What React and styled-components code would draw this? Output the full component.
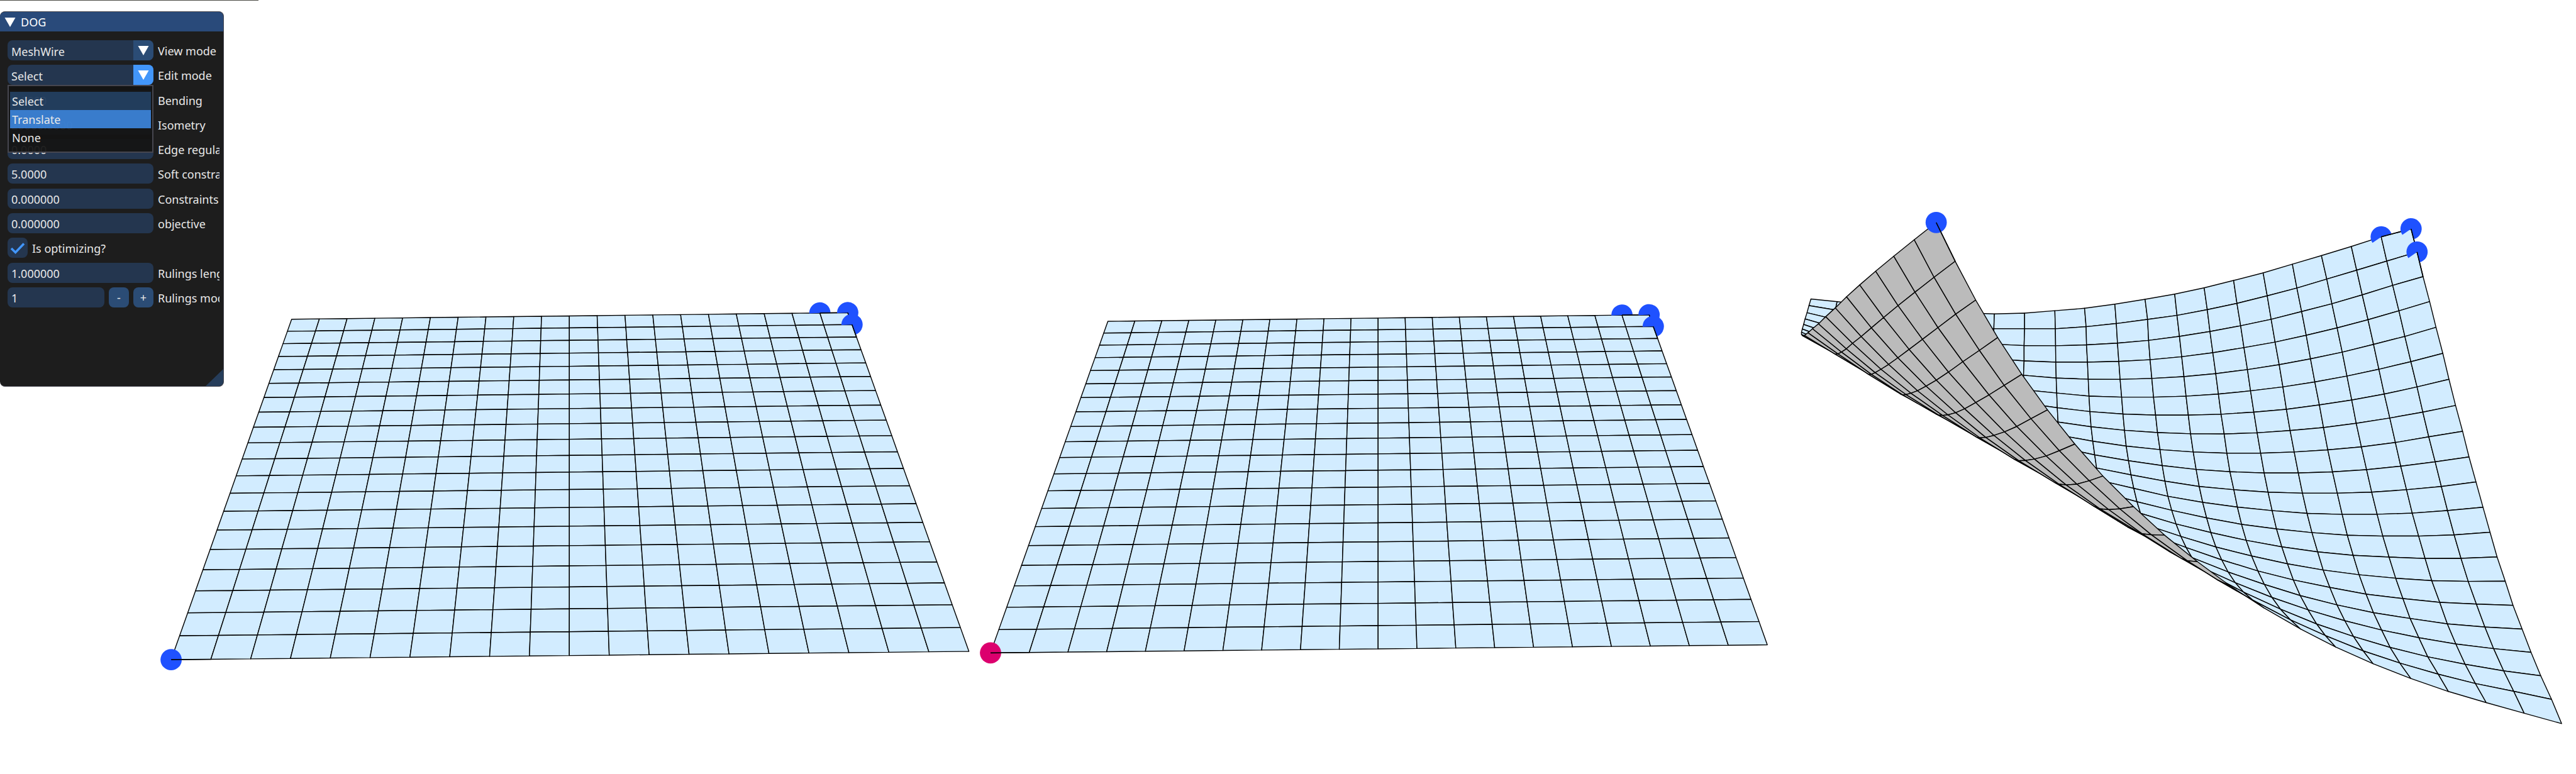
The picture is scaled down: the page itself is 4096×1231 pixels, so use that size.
import React from "react";
import styled, { createGlobalStyle } from "styled-components";

const GlobalStyle = createGlobalStyle`
  *, *::before, *::after { box-sizing: border-box; }
  body { margin: 0; background: #fff; }
`;

const FONT = `"Noto Sans", "Open Sans", sans-serif`;
const TEXT = "#e8e8e8";
const FIELD = "#24364f";
const BUTTON = "#2b4c75";
const ACCENT = "#4296fa";
const BORDER = "#46464f";

/* ---------- mesh geometry ---------- */

const N = 20;

// Perspective image of an N x N square grid, from its four corners
// (top left, top right, bottom right, bottom left).
function planeMesh([a, b, c, d]) {
  const dx1 = b[0] - c[0], dx2 = d[0] - c[0], dx3 = a[0] - b[0] + c[0] - d[0];
  const dy1 = b[1] - c[1], dy2 = d[1] - c[1], dy3 = a[1] - b[1] + c[1] - d[1];
  const det = dx1 * dy2 - dx2 * dy1;
  const g = (dx3 * dy2 - dx2 * dy3) / det;
  const h = (dx1 * dy3 - dx3 * dy1) / det;
  const grid = [];
  for (let r = 0; r <= N; r++) {
    const row = [];
    for (let q = 0; q <= N; q++) {
      const u = q / N, v = r / N, w = g * u + h * v + 1;
      row.push([
        ((b[0] - a[0] + g * b[0]) * u + (d[0] - a[0] + h * d[0]) * v + a[0]) / w,
        ((b[1] - a[1] + g * b[1]) * u + (d[1] - a[1] + h * d[1]) * v + a[1]) / w,
      ]);
    }
    grid.push(row);
  }
  return grid;
}

// Natural cubic spline through (t, y), evaluated at 0..N.
function spline(t, y) {
  const n = t.length;
  const m = new Array(n).fill(0), cp = new Array(n).fill(0), dp = new Array(n).fill(0);
  for (let i = 1; i < n - 1; i++) {
    const h0 = t[i] - t[i - 1], h1 = t[i + 1] - t[i];
    const rhs = 6 * ((y[i + 1] - y[i]) / h1 - (y[i] - y[i - 1]) / h0);
    const den = 2 * (h0 + h1) - h0 * cp[i - 1];
    cp[i] = h1 / den;
    dp[i] = (rhs - h0 * dp[i - 1]) / den;
  }
  for (let i = n - 2; i > 0; i--) m[i] = dp[i] - cp[i] * m[i + 1];
  const out = [];
  for (let x = 0, k = 0; x <= N; x++) {
    while (k < n - 2 && x > t[k + 1]) k++;
    const h = t[k + 1] - t[k], A = (t[k + 1] - x) / h, B = (x - t[k]) / h;
    out.push(A * y[k] + B * y[k + 1] + (((A ** 3 - A) * m[k] + (B ** 3 - B) * m[k + 1]) * h * h) / 6);
  }
  return out;
}

// Folded sheet: vertices are given per patch, each patch with its own origin and
// units; vertices that lie behind the fold are filled in along the column.
function foldedMesh() {
  const cols = Array.from({ length: N + 1 }, () => ({}));
  const put = (p, r, c, x, y) => { cols[c][r] = [p[0] + x / p[2], p[1] + y / p[3]]; };
  const down = (p, c, r, v) => { for (let i = 0; i < v.length; i += 2) put(p, r + i / 2, c, v[i], v[i + 1]); };
  const left = (p, r, c, v) => { for (let i = 0; i < v.length; i += 2) put(p, r, c - i / 2, v[i], v[i + 1]); };
  const right = (p, r, c, v) => { for (let i = 0; i < v.length; i += 2) put(p, r, c + i / 2, v[i], v[i + 1]); };

  const whole = [4200, 460, 0.8435, 1.225];
  const tip = [4200, 480, 2.6133, 3];
  const middle = [4700, 800, 2.24, 2.6133];
  const upper = [5100, 500, 2.0632, 2.24];
  const lower = [5350, 1120, 2.24, 2.45];
  const back = [4400, 840, 3, 3];
  const pinch = [4990, 1200, 3, 3];
  const page = [0, 0, 1, 1];

  right(whole, 0, 6, [414, 341, 474, 339, 534, 332, 593, 325, 653, 313, 713, 299]);
  right(whole, 1, 6, [413, 384, 474, 384, 535, 384, 596, 378, 656, 369, 718, 357]);

  left(upper, 0, 20, [1178, 86, 1033, 128, 888, 179, 743, 227, 602, 272, 460, 318, 317, 358, 174, 397, 31, 430]);
  left(upper, 1, 20, [1207, 208, 1060, 256, 914, 304, 769, 351, 624, 398, 480, 439, 333, 479, 189, 512, 42, 542]);
  left(upper, 2, 20, [1236, 338, 1089, 384, 941, 434, 794, 481, 647, 522, 499, 563, 351, 597, 202, 627, 54, 653]);
  left(upper, 3, 20, [1268, 469, 1119, 518, 969, 565, 819, 608, 669, 647, 518, 683, 367, 712, 216, 739, 65, 760]);
  left(upper, 4, 20, [1299, 605, 1148, 653, 996, 695, 844, 736, 690, 771, 538, 802, 384, 828, 230, 849, 76, 865]);
  left(upper, 5, 20, [1332, 742, 1177, 786, 1022, 826, 867, 862, 711, 893, 556, 919, 399, 940, 243, 957, 86, 968]);
  left(upper, 6, 20, [1362, 879, 1207, 919, 1048, 957, 890, 988, 733, 1014, 573, 1037, 415, 1052, 256, 1063, 97, 1068]);
  left(upper, 7, 20, [1394, 1017, 1235, 1052, 1075, 1083, 912, 1111, 753, 1133, 591, 1149, 431, 1161, 271, 1167, 108, 1166]);
  left(upper, 8, 20, [1428, 1153, 1264, 1182, 1102, 1212, 937, 1235, 774, 1251, 611, 1262, 448, 1268, 284, 1268, 121, 1262]);
  left(upper, 9, 20, [1459, 1288, 1295, 1314, 1128, 1337, 962, 1355, 797, 1367, 631, 1373, 465, 1373, 299, 1366, 135, 1354]);
  left(upper, 10, 20, [1493, 1420, 1325, 1444, 1156, 1461, 987, 1474, 820, 1479, 651, 1479, 484, 1474, 318, 1461, 150, 1444]);

  down(lower, 20, 11, [1098, 180, 1135, 324, 1172, 466, 1215, 606, 1256, 745, 1304, 882, 1351, 1016, 1402, 1151, 1459, 1287, 1512, 1427]);
  down(lower, 19, 11, [911, 199, 946, 339, 982, 474, 1020, 607, 1063, 738, 1108, 870, 1154, 995, 1207, 1123, 1260, 1241, 1315, 1367]);
  down(lower, 18, 11, [725, 214, 759, 346, 793, 475, 828, 603, 870, 728, 910, 852, 955, 968, 1004, 1085, 1058, 1196, 1115, 1306]);
  down(lower, 17, 11, [540, 220, 570, 346, 603, 467, 638, 589, 676, 706, 714, 821, 760, 932, 807, 1042, 862, 1142, 916, 1242]);
  down(lower, 16, 11, [356, 221, 383, 341, 414, 457, 445, 569, 482, 681, 521, 788, 564, 888, 609, 988, 660, 1078, 718, 1167]);
  down(lower, 15, 11, [171, 215, 197, 326, 227, 437, 256, 542, 291, 642, 329, 743, 370, 834, 416, 925, 467, 1008, 519, 1082]);
  down(lower, 14, 12, [10, 305, 38, 408, 68, 506, 99, 599, 135, 689, 176, 771, 222, 853, 268, 920, 322, 986]);

  right(middle, 2, 7, [136, 34, 302, 35, 465, 30, 628, 19, 792, 2]);
  right(middle, 3, 7, [136, 128, 303, 136, 470, 136, 635, 131, 800, 121]);
  right(middle, 4, 7, [133, 217, 305, 234, 474, 241, 642, 242, 809, 236]);
  right(middle, 5, 7, [137, 306, 308, 326, 478, 345, 650, 351, 818, 351]);
  right(middle, 6, 7, [141, 388, 311, 416, 483, 440, 657, 455, 829, 462]);
  right(middle, 7, 7, [145, 470, 315, 504, 489, 533, 665, 555, 839, 569]);
  right(middle, 8, 7, [150, 545, 323, 585, 498, 622, 674, 652, 852, 674]);
  right(middle, 9, 8, [333, 662, 508, 706, 686, 742, 864, 772]);
  right(middle, 10, 8, [343, 738, 518, 787, 699, 829, 878, 868]);
  right(middle, 11, 9, [532, 862, 714, 912, 894, 961, 1077, 998, 1260, 1027, 1443, 1049]);
  right(middle, 12, 9, [547, 935, 731, 994, 914, 1047, 1098, 1094, 1282, 1133]);
  right(middle, 13, 9, [567, 998, 750, 1066, 937, 1131]);
  down(middle, 9, 14, [593, 1060, 630, 1112]);
  down(middle, 10, 14, [772, 1134, 800, 1192, 840, 1248]);
  down(middle, 11, 14, [962, 1207, 990, 1276, 1021, 1338]);

  down(pinch, 13, 13, [880, 214, 918, 324, 962, 430, 1008, 525, 1062, 617, 1122, 700, 1192, 775, 1265, 841]);
  down(pinch, 12, 13, [630, 159, 666, 261, 707, 352, 752, 437, 803, 513, 862, 580, 930, 638, 1005, 691]);
  down(pinch, 11, 17, [545, 397, 603, 445, 680, 494, 767, 536]);
  down(pinch, 10, 18, [425, 343, 465, 358, 535, 364]);

  down(tip, 0, 0, [155, 670, 143, 717, 131, 767, 119, 811, 110, 850, 102, 882, 97, 905, 97, 920, 102, 928,
    115, 927, 137, 908, 165, 880, 202, 845, 246, 795, 305, 733, 374, 655, 455, 571, 553, 474, 664, 368, 790, 252, 925, 130]);
  down(tip, 1, 0, [316, 689, 305, 748, 297, 813, 290, 868, 285, 918, 282, 960, 282, 997, 285, 1030, 293, 1050,
    305, 1060, 322, 1058, 343, 1045, 373, 1022, 411, 983, 464, 935, 527, 874, 602, 801, 691, 717, 795, 622, 912, 517, 1042, 404]);
  down(tip, 2, 11, [527, 1202, 550, 1190, 586, 1166, 633, 1132, 690, 1085, 759, 1026, 841, 955, 936, 872, 1045, 777, 1168, 678]);
  down(tip, 3, 12, [740, 1345, 770, 1335, 811, 1318, 863, 1285, 926, 1243, 1001, 1186, 1089, 1113, 1191, 1033, 1303, 943]);
  down(back, 4, 13, [507, 412, 545, 408, 600, 393, 663, 365, 742, 321, 835, 267, 942, 200, 1066, 122]);
  down(back, 5, 13, [748, 566, 770, 570, 812, 567, 870, 553, 944, 528, 1031, 490, 1131, 435, 1247, 373]);
  down(back, 6, 14, [1015, 722, 1045, 731, 1092, 730, 1156, 720, 1239, 698, 1331, 661, 1440, 614]);
  down(page, 7, 15, [4834, 1136, 4843, 1139, 4860, 1141, 4885, 1139, 4914, 1131, 4946, 1120]);
  down(page, 8, 16, [4925, 1191, 4939, 1197, 4960, 1199, 4986, 1197, 5018, 1192]);
  down(page, 9, 17, [5028, 1251, 5039, 1256, 5060, 1258, 5091, 1259]);

  down(tip, 6, 2, [1280, 989, 1280, 1092, 1278, 1190]);
  right(page, 0, 2, [4395, 718, 4469, 726, 4543, 732, 4617, 736]);
  right(page, 4, 2, [4380, 815, 4455, 839, 4531, 857, 4610, 868]);
  right(page, 8, 2, [4385, 870, 4464, 912, 4543, 948, 4623, 978, 4702, 995]);

  const filled = cols.map((col) => {
    const rows = Object.keys(col).map(Number).sort((p, q) => p - q);
    const xs = spline(rows, rows.map((r) => col[r][0]));
    const ys = spline(rows, rows.map((r) => col[r][1]));
    return xs.map((x, i) => [x, ys[i]]);
  });
  return Array.from({ length: N + 1 }, (_, r) => filled.map((col) => col[r]));
}

const area = (q) => q.reduce((s, p, i) => {
  const n = q[(i + 1) % q.length];
  return s + p[0] * n[1] - n[0] * p[1];
}, 0);

const pts = (list) => list.map((p) => `${p[0].toFixed(1)},${p[1].toFixed(1)}`).join(" ");

function Cells({ grid }) {
  const cells = [];
  for (let r = 0; r < N; r++) {
    for (let c = 0; c < N; c++) {
      const q = [grid[r][c], grid[r][c + 1], grid[r + 1][c + 1], grid[r + 1][c]];
      cells.push(<polygon key={`${r}-${c}`} points={pts(q)} fill={area(q) > 0 ? "#d2ecff" : "#bbbbbb"} />);
    }
  }
  return <g stroke="#000" strokeWidth="2.1" strokeLinejoin="round">{cells}</g>;
}

const R = 25;

// Handle on a vertex: a full disc, or the part of it that shows past the sheet.
function Handle({ grid, at, to, from, disc, color = "#1f51ff" }) {
  const p = grid[at[0]][at[1]];
  const q = grid[to[0]][to[1]];
  const end = Math.atan2(q[1] - p[1], q[0] - p[0]);
  let shape;
  if (disc) {
    shape = <circle cx={p[0]} cy={p[1]} r={R} fill={color} />;
  } else {
    const start = Math.atan2(from[1], from[0]);
    const sweep = (end - start + Math.PI * 4) % (Math.PI * 2);
    const s = [p[0] + R * Math.cos(start), p[1] + R * Math.sin(start)];
    const e = [p[0] + R * Math.cos(end), p[1] + R * Math.sin(end)];
    shape = <path d={`M${p} L${s} A${R} ${R} 0 ${sweep > Math.PI ? 1 : 0} 1 ${e} Z`} fill={color} />;
  }
  return (
    <g>
      {shape}
      <line x1={p[0]} y1={p[1]} x2={q[0]} y2={q[1]} stroke="#000" strokeWidth="2.4" />
    </g>
  );
}

const FLAT = [-1, 0.04];
const SLOPED = [-0.82, 0.57];

const anchors = (from) => [
  { at: [0, 19], to: [0, 20], from },
  { at: [0, 20], to: [1, 20], from },
  { at: [1, 20], to: [2, 20], from },
];

const VIEWS = [
  {
    id: "picked", title: "Flat sheet, corner selected", box: "0 0 2292 1821",
    grid: planeMesh([[686, 751], [1994, 735.5], [2279, 1532.5], [402.5, 1552]]),
    handles: [...anchors(FLAT), { at: [20, 0], to: [20, 1], disc: true }],
  },
  {
    id: "active", title: "Flat sheet, corner active", box: "2292 0 1903 1821",
    grid: planeMesh([[2606.5, 756], [3879.5, 740.5], [4157.5, 1517], [2330.5, 1536]]),
    handles: [...anchors(FLAT), { at: [20, 0], to: [20, 1], disc: true, color: "#dc006e" }],
  },
  {
    id: "folded", title: "Folded sheet", box: "4195 0 1864 1821",
    grid: foldedMesh(),
    handles: [...anchors(SLOPED), { at: [20, 0], to: [20, 1], disc: true }],
  },
];

/* ---------- page ---------- */

const Page = styled.main`
  position: relative;
  font: 18px/32px ${FONT};
  color: ${TEXT};
`;

const TopRule = styled.div`
  position: absolute;
  top: 0;
  left: 0;
  width: 411px;
  height: 1px;
  background: #4a4a44;
`;

const Stage = styled.section`
  display: grid;
  grid-template-columns: 2292fr 1903fr 1864fr;
`;

const Viewport = styled.svg`
  display: block;
  width: 100%;
  height: auto;
`;

/* ---------- tool window ---------- */

const Panel = styled.aside`
  position: absolute;
  top: 18px;
  left: 0;
  width: 356px;
  background: #1d1d1d;
  border: 1px solid ${BORDER};
  border-left: 0;
  border-radius: 8px;
  overflow: hidden;
`;

const TitleBar = styled.header`
  display: flex;
  align-items: center;
  height: 31px;
  background: #294a7a;
  color: #fff;
`;

const TitleText = styled.h1`
  margin: 0;
  font-size: 18px;
  line-height: 32px;
  font-weight: 400;
`;

const Collapse = styled.button`
  display: flex;
  width: 33px;
  height: 31px;
  padding: 0;
  border: 0;
  background: none;
`;

const Form = styled.form`
  display: flex;
  flex-direction: column;
  justify-content: space-between;
  height: 425px;
  margin: 14px 6px 125px 12px;
`;

const Row = styled.div`
  display: flex;
  gap: 7px;
  height: 32px;
`;

const Label = styled.label`
  flex: 1;
  min-width: 0;
  line-height: 34px;
  overflow: hidden;
  white-space: nowrap;
`;

const Field = styled.input`
  width: ${(p) => p.$width || 232}px;
  height: 32px;
  padding: 2px 6px 0;
  border: 0;
  border-radius: 8px;
  background: ${FIELD};
  color: inherit;
  font: inherit;
`;

const Combo = styled.div`
  position: relative;
  display: grid;
  grid-template-columns: 200px 32px;
  width: 232px;
  height: 32px;
  border-radius: 8px;
`;

const Select = styled.select`
  grid-area: 1 / 1 / 2 / 3;
  appearance: none;
  height: 32px;
  padding: 2px 38px 0 6px;
  border: 0;
  border-radius: 8px;
  background: ${FIELD};
  color: inherit;
  font: inherit;
`;

const ComboArrow = styled.span`
  grid-area: 1 / 2 / 2 / 3;
  display: flex;
  border-radius: 0 8px 8px 0;
  background: ${(p) => (p.$open ? ACCENT : BUTTON)};
  pointer-events: none;
`;

const Popup = styled.ul`
  position: absolute;
  z-index: 1;
  top: 32px;
  left: 0;
  width: 232px;
  margin: 0;
  padding: 9px 2px 8px;
  border: 2px solid ${BORDER};
  background: rgba(20, 20, 20, 0.94);
  list-style: none;
`;

const Option = styled.li`
  height: 29px;
  padding: 0 3px;
  line-height: 30px;
  background: ${(p) => (p.$hover ? "rgba(66, 150, 250, 0.8)" : p.$selected ? "rgba(66, 150, 250, 0.31)" : "none")};
`;

const CheckWrap = styled.span`
  display: grid;
  width: 32px;
  height: 32px;
`;

const CheckInput = styled.input`
  grid-area: 1 / 1;
  appearance: none;
  width: 32px;
  height: 32px;
  margin: 0;
  border-radius: 8px;
  background: ${FIELD};
`;

const CheckMark = styled.svg`
  grid-area: 1 / 1;
  pointer-events: none;
`;

const StepButton = styled.button`
  width: 32px;
  height: 32px;
  padding: 0;
  border: 0;
  border-radius: 8px;
  background: ${BUTTON};
  color: inherit;
  font: inherit;
`;

const Grip = styled.svg`
  position: absolute;
  right: 0;
  bottom: 0;
`;

const Triangle = () => (
  <svg width="32" height="32" viewBox="0 0 32 32" aria-hidden="true">
    <path d="M7.5 9H24.5L16 24Z" fill="#fff" />
  </svg>
);

function ComboRow({ id, label, value, options, open, hover }) {
  return (
    <Row>
      <Combo>
        <Select id={id} defaultValue={value}>
          {options.map((o) => <option key={o}>{o}</option>)}
        </Select>
        <ComboArrow $open={open}><Triangle /></ComboArrow>
        {open && (
          <Popup role="listbox" aria-label={label}>
            {options.map((o) => (
              <Option key={o} role="option" aria-selected={o === value} $selected={o === value} $hover={o === hover}>{o}</Option>
            ))}
          </Popup>
        )}
      </Combo>
      <Label htmlFor={id}>{label}</Label>
    </Row>
  );
}

const FieldRow = ({ id, label, value }) => (
  <Row>
    <Field id={id} type="text" defaultValue={value} />
    <Label htmlFor={id}>{label}</Label>
  </Row>
);

const WEIGHTS = [
  { id: "bending", label: "Bending", value: "1.0000" },
  { id: "isometry", label: "Isometry", value: "20000.0000" },
  { id: "edge", label: "Edge regula", value: "0.0000" },
  { id: "soft", label: "Soft constra", value: "5.0000" },
  { id: "constraints", label: "Constraints", value: "0.000000" },
  { id: "objective", label: "objective", value: "0.000000" },
];

export default function App() {
  return (
    <Page>
      <GlobalStyle />
      <Stage>
        {VIEWS.map((v) => (
          <Viewport key={v.id} viewBox={v.box} role="img" aria-label={v.title}>
            <Cells grid={v.grid} />
            {v.handles.map((h, i) => <Handle key={i} grid={v.grid} {...h} />)}
          </Viewport>
        ))}
      </Stage>
      <TopRule />
      <Panel>
        <TitleBar>
          <Collapse type="button" aria-label="Collapse"><Triangle /></Collapse>
          <TitleText>DOG</TitleText>
        </TitleBar>
        <Form>
          <ComboRow id="view" label="View mode" value="MeshWire" options={["MeshWire"]} />
          <ComboRow id="edit" label="Edit mode" value="Select" options={["Select", "Translate", "None"]} open hover="Translate" />
          {WEIGHTS.map((w) => <FieldRow key={w.id} {...w} />)}
          <Row>
            <CheckWrap>
              <CheckInput id="optimizing" type="checkbox" defaultChecked />
              <CheckMark width="32" height="32" viewBox="0 0 32 32" aria-hidden="true">
                <path d="M6 17L12.6 23.5L26 9.5" fill="none" stroke={ACCENT} strokeWidth="3.6" />
              </CheckMark>
            </CheckWrap>
            <Label htmlFor="optimizing">Is optimizing?</Label>
          </Row>
          <FieldRow id="length" label="Rulings leng" value="1.000000" />
          <Row>
            <Field id="mode" type="text" defaultValue="1" $width={154} />
            <StepButton type="button">-</StepButton>
            <StepButton type="button">+</StepButton>
            <Label htmlFor="mode">Rulings mod</Label>
          </Row>
        </Form>
        <Grip width="28" height="27" viewBox="0 0 28 27" aria-hidden="true">
          <path d="M28 0V27H0Z" fill="#263d5a" />
        </Grip>
      </Panel>
    </Page>
  );
}
